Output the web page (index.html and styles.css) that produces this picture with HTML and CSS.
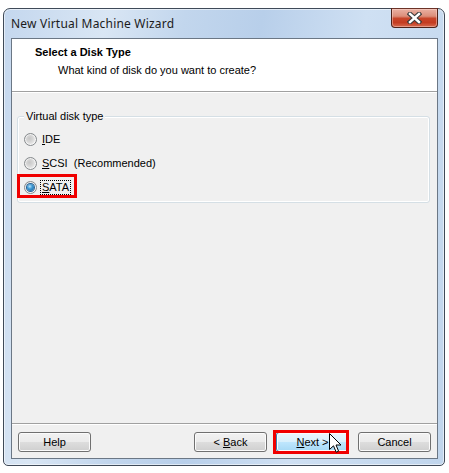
FILE: index.html
```html
<!DOCTYPE html>
<html>
<head>
<meta charset="utf-8">
<link rel="stylesheet" href="styles.css">
</head>
<body>
<div class="window">
  <div class="titlebar">
    <span class="title">New Virtual Machine Wizard</span>
    <div class="close">
      <svg width="15" height="12" viewBox="0 0 15 12">
        <path d="M3 2 L12 10 M12 2 L3 10" stroke="#3b3b3b" stroke-width="4.6" stroke-linecap="square" fill="none"/>
        <path d="M3 2 L12 10 M12 2 L3 10" stroke="#ffffff" stroke-width="2.4" stroke-linecap="square" fill="none"/>
      </svg>
    </div>
  </div>
  <div class="client">
    <div class="header">
      <div class="h-title">Select a Disk Type</div>
      <div class="h-sub">What kind of disk do you want to create?</div>
    </div>
    <div class="content">
      <div class="group">
        <div class="legend-row"><span class="legend">Virtual disk type</span></div>
        <div class="radios">
          <div class="radio-row">
            <span class="radio"></span><span class="label"><u>I</u>DE</span>
          </div>
          <div class="radio-row">
            <span class="radio"></span><span class="label"><u>S</u>CSI&nbsp;&nbsp;(Recommended)</span>
          </div>
          <div class="radio-row">
            <span class="radio checked"><span class="dot"></span></span><span class="label focus"><u>S</u>ATA</span>
            <span class="redbox redbox-sata"></span>
          </div>
        </div>
      </div>
    </div>
    <div class="footer">
      <button class="btn">Help</button>
      <div class="nav">
        <button class="btn">&lt; <u>B</u>ack</button>
        <div class="next-wrap">
          <button class="btn hot"><u>N</u>ext &gt;</button>
          <span class="redbox redbox-next"></span>
          <svg class="cursor" width="13" height="21" viewBox="0 0 13 21">
            <path d="M0.5 0.5 L0.5 16.5 L4.5 12.8 L7.2 19.2 L9.6 18.2 L7 12 L12 12 Z" fill="#ffffff" stroke="#000000" stroke-width="1" stroke-linejoin="miter"/>
          </svg>
        </div>
        <button class="btn">Cancel</button>
      </div>
    </div>
  </div>
</div>
</body>
</html>
```

FILE: styles.css
```css
html, body {
  margin: 0;
  padding: 0;
  background: #ffffff;
}

body {
  font-family: "Liberation Sans", Arial, sans-serif;
  font-size: 11px;
  color: #000;
}

.window {
  margin: 8px 0 0 3px;
  width: 442px;
  height: 458px;
  box-sizing: border-box;
  border: 1px solid #3f4a58;
  border-radius: 7px 7px 5px 5px;
  background: linear-gradient(100deg, #c4d7ee 0%, #d9e6f4 20%, #c2d6ed 35%, #b8cfea 50%, #cfe0f3 70%, #c0d5ec 100%);
  padding: 0 6px 6px 7px;
  display: flex;
  flex-direction: column;
  box-shadow: inset 0 0 0 1px rgba(255,255,255,0.55);
}

.titlebar {
  height: 29px;
  display: flex;
  justify-content: space-between;
  align-items: flex-start;
  flex: none;
}

.title {
  font-family: "Noto Sans", "Open Sans", sans-serif;
  font-size: 12px;
  color: #1b1b1b;
  margin-top: 6px;
  letter-spacing: 0.2px;
}

.close {
  margin-top: -1px;
  width: 47px;
  height: 20px;
  box-sizing: border-box;
  border: 1px solid #4e2219;
  border-top-color: #6b3328;
  border-radius: 0 0 4px 4px;
  background: linear-gradient(#eab1a3 0%, #dc8e7a 40%, #c8462b 52%, #c43c21 75%, #d66a4f 100%);
  box-shadow: inset 0 0 0 1px rgba(255,220,210,0.45);
  display: flex;
  align-items: center;
  justify-content: center;
}

.client {
  flex: 1;
  border: 1px solid #6b7785;
  background: #f0f0f0;
  display: flex;
  flex-direction: column;
}

.header {
  height: 52px;
  background: #ffffff;
  border-bottom: 1px solid #a0a0a0;
  flex: none;
}

.h-title {
  font-weight: bold;
  padding: 7px 0 0 23px;
  line-height: 13px;
}

.h-sub {
  padding: 5px 0 0 46px;
  line-height: 13px;
}

.content {
  flex: 1;
  border-top: 1px solid #ffffff;
  padding: 23px 7px 0 5px;
}

.group {
  border: 1px solid #d5dfe5;
  border-radius: 3px;
  padding: 0 6px 3px 6px;
  box-shadow: inset 0 0 0 1px #ffffff;
}

.legend-row {
  display: flex;
  margin-top: -7px;
  height: 13px;
}

.legend {
  padding: 0 2px;
  line-height: 13px;
  background: #f0f0f0;
  white-space: nowrap;
}

.radios {
  margin-top: 4px;
  display: flex;
  flex-direction: column;
}

.radio-row {
  position: relative;
  height: 24px;
  display: flex;
  align-items: center;
}

.radio {
  width: 13px;
  height: 13px;
  box-sizing: border-box;
  border-radius: 50%;
  border: 1px solid #85898c;
  background: radial-gradient(circle at 40% 40%, #c6c6c6 0%, #d6d6d6 35%, #ececec 70%, #fbfbfb 100%);
  box-shadow: inset 0 0 0 1px rgba(255,255,255,0.6);
  margin-right: 4px;
  display: flex;
  align-items: center;
  justify-content: center;
  flex: none;
}

.radio .dot {
  width: 7px;
  height: 7px;
  border-radius: 50%;
  background: radial-gradient(circle at 40% 35%, #b9e4fb 0%, #3c98d4 40%, #1a5d95 100%);
  box-shadow: 0 0 0 1px #2a6496;
}

.label {
  line-height: 13px;
  padding: 0 1px;
}

.label.focus {
  outline: 1px dotted #000;
  outline-offset: 0;
}

.redbox {
  position: absolute;
  border: 3px solid #f00000;
  box-sizing: border-box;
  pointer-events: none;
}

.redbox-sata {
  left: -7px;
  top: -1px;
  width: 60px;
  height: 24px;
}

.footer {
  flex: none;
  height: 26px;
  border-top: 1px solid #a0a0a0;
  box-shadow: inset 0 1px 0 #ffffff;
  padding: 8px 6px 0 6px;
  display: flex;
  justify-content: space-between;
  align-items: flex-start;
}

.nav {
  display: flex;
  gap: 9px;
}

.btn {
  width: 73px;
  height: 20px;
  box-sizing: border-box;
  border: 1px solid #707070;
  border-radius: 3px;
  background: linear-gradient(#f2f2f2 0%, #ebebeb 48%, #dddddd 52%, #cfcfcf 100%);
  box-shadow: inset 0 0 0 1px #fbfbfb;
  font-family: "Liberation Sans", Arial, sans-serif;
  font-size: 11px;
  color: #000;
  padding: 0;
  margin: 0;
  line-height: 16px;
}

.btn.hot {
  border-color: #3c7fb1;
  background: linear-gradient(#eaf6fd 0%, #d9f0fc 48%, #bee6fd 52%, #a7d9f5 100%);
}

.next-wrap {
  position: relative;
}

.redbox-next {
  left: -3px;
  top: -2px;
  width: 76px;
  height: 24px;
}

.cursor {
  position: absolute;
  left: 53px;
  top: 1px;
}
```
